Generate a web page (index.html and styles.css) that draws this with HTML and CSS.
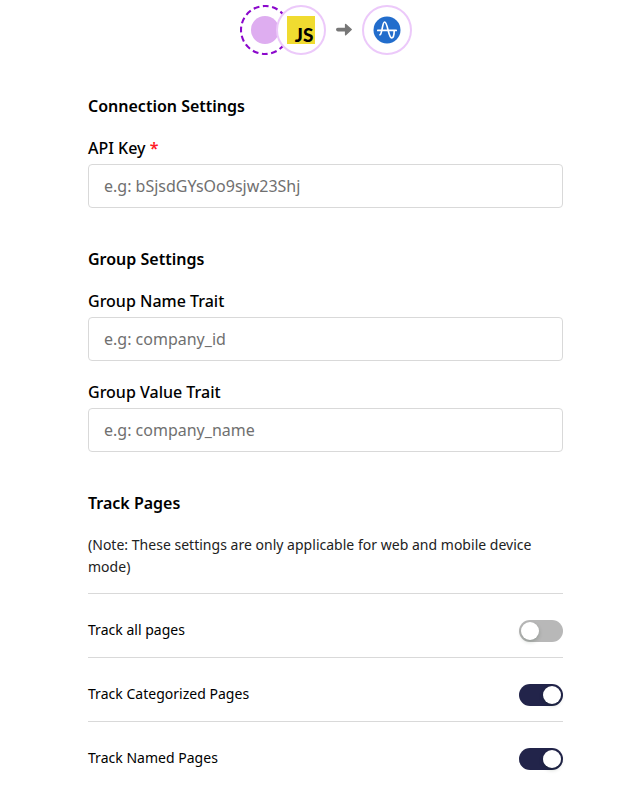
FILE: index.html
```html
<!DOCTYPE html>
<html lang="en">
<head>
<meta charset="utf-8">
<title>Destination settings</title>
<link rel="stylesheet" href="styles.css">
</head>
<body>
<header class="flow">
  <svg class="source" viewBox="0 0 50 50"><circle cx="25" cy="25" r="24" fill="#fff" stroke="#8b08cc" stroke-width="2.1" stroke-dasharray="5.9 3.525" stroke-dashoffset="2.95"/><circle cx="25" cy="25" r="14" fill="#deadf0"/></svg>
  <div class="node node-js">
    <svg class="js-logo" viewBox="0 0 28 28"><rect width="28" height="28" fill="#f0db30"/><text x="7.8" y="25.6" textLength="18.6" lengthAdjust="spacingAndGlyphs">JS</text></svg>
  </div>
  <svg class="arrow" viewBox="0 0 16 14"><path d="M1.8 6.6H10" stroke="#777" stroke-width="3.6" stroke-linecap="round"/><path d="M9.6 1.4L15.2 6.6L9.6 11.8Z" fill="#777" stroke="#777" stroke-linejoin="round" stroke-width="1.4"/></svg>
  <div class="node">
    <svg class="amp-logo" viewBox="0 0 28 28" fill="none" stroke="#fff" stroke-width="1.7" stroke-linecap="round" stroke-linejoin="round"><circle cx="14" cy="14" r="13.5" fill="#226dcc" stroke="none"/><path d="M4.8 14.4H23.2M7 18.8C9.3 18 9.2 6 11.6 6C14.6 6 15.4 21.8 18.6 21.8C20.7 21.8 21.2 18 21.2 14.4"/></svg>
  </div>
</header>
<main class="form">
  <section class="section">
    <h2>Connection Settings</h2>
    <label class="field"><span>API Key <b class="required">*</b></span><input type="text" placeholder="e.g: bSjsdGYsOo9sjw23Shj"></label>
  </section>
  <section class="section">
    <h2>Group Settings</h2>
    <label class="field"><span>Group Name Trait</span><input type="text" placeholder="e.g: company_id"></label>
    <label class="field"><span>Group Value Trait</span><input type="text" placeholder="e.g: company_name"></label>
  </section>
  <section class="section">
    <h2>Track Pages</h2>
    <p class="note">(Note: These settings are only applicable for web and mobile device mode)</p>
    <div class="row"><span>Track all pages</span><span class="switch" role="switch" aria-checked="false"></span></div>
    <div class="row"><span>Track Categorized Pages</span><span class="switch on" role="switch" aria-checked="true"></span></div>
    <div class="row"><span>Track Named Pages</span><span class="switch on" role="switch" aria-checked="true"></span></div>
  </section>
</main>
</body>
</html>
```
FILE: styles.css
```css
* { box-sizing: border-box; }
body { margin: 0; background: #fff; color: #000; font: 14px/22px "Noto Sans", sans-serif; overflow: hidden; }
.flow { display: flex; align-items: center; padding: 5px 0 0 240px; }
.node { width: 50px; height: 50px; border: 2px solid #ecc9fa; border-radius: 50%; background: #fff; display: flex; align-items: center; justify-content: center; }
.source { width: 50px; height: 50px; display: block; }
.node-js { margin-left: -14px; position: relative; }
.js-logo, .amp-logo { width: 28px; height: 28px; display: block; overflow: visible; }
.js-logo text { font: 900 18px Lato, sans-serif; fill: #000; }
.arrow { width: 16px; height: 14px; margin: 0 10px; fill: none; }
.form { width: 475px; margin: 39px 0 0 88px; }
.section { margin-bottom: 39px; }
h2 { margin: 0 0 19px; font-size: 16px; line-height: 24px; font-weight: 600; }
.field { display: block; margin-bottom: 20px; font-size: 16px; font-weight: 500; line-height: 22px; }
.field:last-child { margin-bottom: 0; }
.field span { display: block; }
.required { color: #ff1a26; font-weight: 600; }
input { display: block; width: 100%; height: 44px; margin-top: 5px; padding: 0 15px; border: 1px solid #d9d9d9; border-radius: 4px; background: #fff; font: 400 16px "Noto Sans", sans-serif; outline: 0; }
input::placeholder { color: #707070; opacity: 1; }
.note { margin: 0 0 15px; color: #222; letter-spacing: .018px; }
.row { display: flex; justify-content: space-between; align-items: flex-start; height: 64px; border-top: 1px solid #d9d9d9; padding-top: 25px; letter-spacing: .02px; }
.switch { width: 44px; height: 22px; margin-top: 1px; padding: 2px; border-radius: 11px; background: #b8b8b8; display: flex; }
.switch::before { content: ""; width: 18px; height: 18px; border-radius: 50%; background: #fff; box-shadow: 0 2px 4px rgba(0, 35, 11, .2); }
.switch.on { background: #22244a; justify-content: flex-end; }
```
